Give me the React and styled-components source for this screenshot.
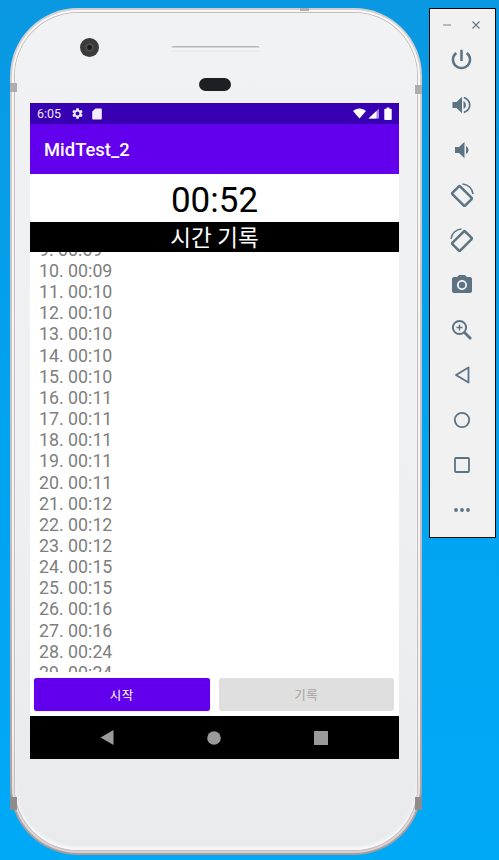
import React from "react";
import styled, { createGlobalStyle } from "styled-components";

const GlobalStyle = createGlobalStyle`
  html, body { margin: 0; padding: 0; background: #00a3ef; }
  * { box-sizing: border-box; }
`;

const Desktop = styled.div`
  width: 499px;
  height: 860px;
  overflow: hidden;
  display: flex;
  align-items: flex-start;
  padding: 8px 0 0 10px;
  background: linear-gradient(180deg, #0a98e2 0%, #02a2ee 45%, #00a9f6 100%);
  font-family: Roboto, "Noto Sans CJK KR", sans-serif;
`;

const Phone = styled.div`
  position: relative;
  flex: none;
  width: 412px;
  height: 847px;
  border-radius: 68px;
  padding: 2px;
  background: linear-gradient(180deg, #d3cfcf 0%, #c4bfc0 60%, #a89b9d 100%);
`;

const PhoneInner = styled.div`
  height: 100%;
  border-radius: 66px;
  padding: 3px;
  background: linear-gradient(180deg, #f8f7f6 0%, #f4f2f2 85%, #d8d0d2 100%);
`;

const PhoneFace = styled.div`
  height: 100%;
  border-radius: 63px;
  padding: 0 20px 0 15px;
  background: linear-gradient(180deg, #f1f2f3 0%, #eeeff0 60%, #e9eaec 100%);
  box-shadow: inset 0 -3px 3px #f8f8f9, 0 0 0 1px #c4bcbe;
`;

const Band = styled.span`
  position: absolute;
  background: ${(p) => p.$color || "#aeacad"};
  ${(p) => p.$css}
`;

const Bezel = styled.div`
  height: 90px;
  display: flex;
  flex-direction: column;
  align-items: center;
`;

const BezelRow = styled.div`
  width: 100%;
  height: 65px;
  display: flex;
  align-items: flex-start;
  padding: 25px 0 0 50px;
`;

const Camera = styled.div`
  width: 19px;
  height: 19px;
  border-radius: 50%;
  background: radial-gradient(circle, #1b1b1b 0 2px, #555 3px, #3a3a3a 5px, #3d3d3d 100%);
`;

const Speaker = styled.div`
  width: 89px;
  height: 6px;
  margin: 8px 0 0 72px;
  border-radius: 3px 3px 0 0;
  background: linear-gradient(180deg, #b5b6b8 0 1px, #f8f8f8 2px, #e6e7e8 100%);
`;

const Sensor = styled.div`
  width: 32px;
  height: 13px;
  margin-left: 2px;
  border-radius: 7px;
  background: #1e1f22;
`;

const Screen = styled.div`
  width: 369px;
  height: 656px;
  display: flex;
  flex-direction: column;
  background: #fff;
`;

const StatusBar = styled.div`
  height: 21px;
  display: flex;
  align-items: center;
  padding: 0 7px;
  color: #f0e8fb;
  font-size: 12.5px;
  background: #3700b3;
`;

const StatusTime = styled.span`
  margin-right: 10px;
`;

const Spacer = styled.span`
  flex: ${(p) => (p.$grow ? 1 : "none")};
  width: ${(p) => p.$w || 0}px;
`;

const AppBar = styled.div`
  height: 50px;
  display: flex;
  align-items: center;
  padding: 0 14px;
  color: #fff;
  font-size: 18.4px;
  font-weight: 500;
  background: #6200ee;
`;

const Timer = styled.div`
  height: 48px;
  line-height: 53px;
  text-align: center;
  color: #000;
  font-size: 35px;
`;

const RecordTitle = styled.div`
  height: 30px;
  line-height: 33px;
  text-align: center;
  color: #fff;
  font-size: 22.5px;
  background: #000;
`;

const LapList = styled.ol`
  flex: 1;
  min-height: 0;
  overflow: hidden;
  list-style: none;
  margin: 0;
  padding: 0 0 0 9px;
`;

const LapRow = styled.li`
  height: 21.17px;
  line-height: 21.17px;
  color: #7e7e7e;
  font-size: 17.8px;
  white-space: pre;
  &:first-child {
    margin-top: -13.2px;
  }
`;

const ButtonRow = styled.div`
  height: 44px;
  display: flex;
  gap: 9px;
  padding: 6px 5px 5px 4px;
`;

const ActionButton = styled.button`
  flex: 1;
  height: 33px;
  margin: 0;
  padding: 0;
  border: 0;
  border-radius: 3px;
  font-family: inherit;
  font-size: 12.5px;
  letter-spacing: 0.4px;
  color: ${(p) => (p.disabled ? "#a3a3a3" : "#fff")};
  background: ${(p) => (p.disabled ? "#dfdfdf" : "#6200ee")};
  box-shadow: ${(p) => (p.disabled ? "none" : "0 0 1px rgba(98, 0, 238, 0.6)")};
`;

const NavBar = styled.div`
  height: 43px;
  display: grid;
  grid-template-columns: repeat(3, 107px);
  align-items: center;
  justify-items: center;
  padding: 0 0 0 23px;
  background: #000;
`;

const Panel = styled.aside`
  flex: none;
  width: 67px;
  height: 530px;
  margin-left: 7px;
  padding-right: 2px;
  border: 1px solid #0b0b0b;
  background: #f1f1f2;
  display: flex;
  flex-direction: column;
  align-items: center;
`;

const WindowControls = styled.div`
  height: 28px;
  width: 100%;
  display: flex;
  align-items: center;
  justify-content: space-between;
  padding: 4px 13px 0 13px;
`;

const ToolButton = styled.div`
  flex: none;
  width: 100%;
  height: 45px;
  display: flex;
  align-items: center;
  justify-content: center;
`;

const INK = "#5c7383";

const Icon = ({ d, size = 24, fill = INK, children }) => (
  <svg width={size} height={size} viewBox="0 0 24 24" fill={fill}>
    {d && <path d={d} />}
    {children}
  </svg>
);

const RotateIcon = ({ mirror }) => (
  <Icon fill="none">
    <g transform={mirror ? "translate(24 0) scale(-1 1)" : undefined} stroke={INK}>
      <rect x="6.5" y="4" width="11" height="18" rx="1.2" strokeWidth="2.5" transform="rotate(-45 12 13)" />
      <path d="M12.5 1C17.8 1.2 22.6 5.6 23 11" strokeWidth="1.5" />
    </g>
  </Icon>
);

const laps = [
  [9, "00:09"], [10, "00:09"], [11, "00:10"], [12, "00:10"], [13, "00:10"],
  [14, "00:10"], [15, "00:10"], [16, "00:11"], [17, "00:11"], [18, "00:11"],
  [19, "00:11"], [20, "00:11"], [21, "00:12"], [22, "00:12"], [23, "00:12"],
  [24, "00:15"], [25, "00:15"], [26, "00:16"], [27, "00:16"], [28, "00:24"],
  [29, "00:24"],
];

const StatusIcons = () => (
  <>
    <Icon
      size={13}
      fill="#f3edfb"
      d="M19.14 12.94c.04-.3.06-.61.06-.94s-.02-.64-.07-.94l2.03-1.58c.18-.14.23-.41.12-.61l-1.92-3.32c-.12-.22-.37-.29-.59-.22l-2.39.96c-.5-.38-1.03-.7-1.62-.94l-.36-2.54c-.04-.24-.24-.41-.48-.41h-3.84c-.24 0-.43.17-.47.41l-.36 2.54c-.59.24-1.13.57-1.62.94l-2.39-.96c-.22-.08-.47 0-.59.22L2.74 8.87c-.12.21-.08.47.12.61l2.03 1.58c-.05.3-.09.63-.09.94s.02.64.07.94l-2.03 1.58c-.18.14-.23.41-.12.61l1.92 3.32c.12.22.37.29.59.22l2.39-.96c.5.38 1.03.7 1.62.94l.36 2.54c.05.24.24.41.48.41h3.84c.24 0 .44-.17.47-.41l.36-2.54c.59-.24 1.13-.56 1.62-.94l2.39.96c.22.08.47 0 .59-.22l1.92-3.32c.12-.22.07-.47-.12-.61l-2.01-1.58zM12 15.6c-1.98 0-3.6-1.62-3.6-3.6s1.62-3.6 3.6-3.6 3.6 1.62 3.6 3.6-1.62 3.6-3.6 3.6z"
    />
    <Spacer $w={8} />
    <svg width="10" height="12" viewBox="0 0 10 12" fill="#f3edfb">
      <path d="M3.5 0.5H8.8c.6 0 1 .4 1 1v9c0 .6-.4 1-1 1H1.2c-.6 0-1-.4-1-1V3.6z" />
    </svg>
    <Spacer $grow />
    <svg width="13" height="11" viewBox="0 0 13 11" fill="#fff">
      <path d="M6.5 10.6 0 3C1.8 1.3 4 0.4 6.5 0.4S11.2 1.3 13 3z" />
    </svg>
    <Spacer $w={2} />
    <svg width="11" height="11" viewBox="0 0 11 11" fill="#fff">
      <path d="M11 0.5V10.5H0.5z" opacity="0.55" />
      <path d="M8.5 3V10.5H0.5z" />
    </svg>
    <Spacer $w={5} />
    <svg width="8" height="13" viewBox="0 0 8 13" fill="#fff">
      <path d="M2.6 0.5h2.8v1.2h1.3c.6 0 1 .4 1 1V12c0 .6-.4 1-1 1H1.3c-.6 0-1-.4-1-1V2.7c0-.6.4-1 1-1h1.3z" />
    </svg>
  </>
);

const tools = [
  <Icon size={25}>
    <path d="M13.2 2.6h-2.4v10.8h2.4V2.6zm4.7 2.3l-1.7 1.7C17.9 7.9 19 9.9 19 12c0 3.9-3.1 7-7 7s-7-3.1-7-7c0-2.1 1.1-4.1 2.8-5.4L6.1 4.9C4 6.7 2.6 9.2 2.6 12c0 5.2 4.2 9.4 9.4 9.4s9.4-4.2 9.4-9.4c0-2.8-1.4-5.3-3.5-7.1z" />
  </Icon>,
  <Icon d="M2.5 9v6h4l5.5 5.2V3.8L6.5 9h-4zm13.5 3c0-1.77-1.02-3.29-2.5-4.03v8.05c1.48-.73 2.5-2.25 2.5-4.02zM13.8 3.8v1.7c2.9.9 5.1 3.3 5.1 6.5s-2.2 5.6-5.1 6.5v1.7c3.9-.9 6.8-4.2 6.8-8.2s-2.9-7.3-6.8-8.2z" />,
  <Icon d="M18.5 12c0-1.77-1.02-3.29-2.5-4.03v8.05c1.48-.73 2.5-2.25 2.5-4.02zM5 9v6h4l5.5 5.2V3.8L9 9H5z" />,
  <RotateIcon />,
  <RotateIcon mirror />,
  <Icon>
    <circle cx="12" cy="12" r="3.2" />
    <path d="M9 2L7.17 4H4c-1.1 0-2 .9-2 2v12c0 1.1.9 2 2 2h16c1.1 0 2-.9 2-2V6c0-1.1-.9-2-2-2h-3.17L15 2H9zm3 15c-2.76 0-5-2.24-5-5s2.24-5 5-5 5 2.24 5 5-2.24 5-5 5z" />
  </Icon>,
  <Icon fill="none">
    <g stroke={INK} strokeWidth="2">
      <circle cx="9.5" cy="9.5" r="6.6" />
      <path d="M14.5 14.5l6.5 6.5" strokeWidth="2.6" />
      <path d="M9.5 6.5v6M6.5 9.5h6" strokeWidth="1.4" />
    </g>
  </Icon>,
  <Icon fill="none">
    <path d="M18.5 4.5v15L6 12z" stroke={INK} strokeWidth="1.8" strokeLinejoin="round" />
  </Icon>,
  <Icon fill="none">
    <circle cx="12" cy="12" r="7.2" stroke={INK} strokeWidth="1.8" />
  </Icon>,
  <Icon fill="none">
    <rect x="5" y="5" width="14" height="14" rx="1" stroke={INK} strokeWidth="1.8" />
  </Icon>,
  <Icon>
    <circle cx="6" cy="12" r="1.9" />
    <circle cx="12" cy="12" r="1.9" />
    <circle cx="18" cy="12" r="1.9" />
  </Icon>,
];

export default function App() {
  return (
    <Desktop>
      <GlobalStyle />
      <Phone>
        <Band $css="top: 0; left: 290px; width: 9px; height: 3px;" />
        <Band $css="top: 75px; left: 0; width: 7px; height: 9px;" />
        <Band $css="top: 77px; right: 0; width: 7px; height: 9px;" />
        <Band $color="#8f8a8c" $css="bottom: 45px; left: 0; width: 7px; height: 13px;" />
        <Band $color="#8f8a8c" $css="bottom: 45px; right: 0; width: 7px; height: 13px;" />
        <PhoneInner>
          <PhoneFace>
            <Bezel>
              <BezelRow>
                <Camera />
                <Speaker />
              </BezelRow>
              <Sensor />
            </Bezel>
            <Screen>
              <StatusBar>
                <StatusTime>6:05</StatusTime>
                <StatusIcons />
              </StatusBar>
              <AppBar>MidTest_2</AppBar>
              <Timer>00:52</Timer>
              <RecordTitle>시간 기록</RecordTitle>
              <LapList>
                {laps.map(([n, t]) => (
                  <LapRow key={n}>{`${n}. ${t}`}</LapRow>
                ))}
              </LapList>
              <ButtonRow>
                <ActionButton>시작</ActionButton>
                <ActionButton disabled>기록</ActionButton>
              </ButtonRow>
              <NavBar>
                <svg width="14" height="15" viewBox="0 0 14 15" fill="#9a9a9a">
                  <path d="M13.5 0v15L0.5 7.5z" />
                </svg>
                <svg width="14" height="14" viewBox="0 0 14 14" fill="#9a9a9a">
                  <circle cx="7" cy="7" r="6.8" />
                </svg>
                <svg width="14" height="14" viewBox="0 0 14 14" fill="#9a9a9a">
                  <rect width="14" height="14" rx="0.5" />
                </svg>
              </NavBar>
            </Screen>
          </PhoneFace>
        </PhoneInner>
      </Phone>
      <Panel>
        <WindowControls>
          <svg width="8" height="8" viewBox="0 0 8 8"><path d="M0 4h8" stroke="#8b98a1" strokeWidth="1.2" /></svg>
          <svg width="8" height="8" viewBox="0 0 8 8"><path d="M0.5 0.5l7 7M7.5 0.5l-7 7" stroke="#66757f" strokeWidth="1.1" /></svg>
        </WindowControls>
        {tools.map((icon, i) => (
          <ToolButton key={i}>{icon}</ToolButton>
        ))}
      </Panel>
    </Desktop>
  );
}
